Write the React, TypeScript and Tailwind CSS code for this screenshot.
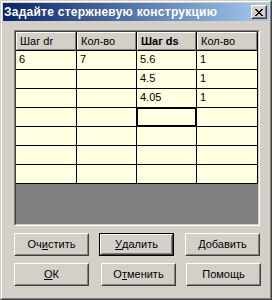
import React from "react";

const font = { fontFamily: '"Liberation Sans", Arial, sans-serif' };

function Btn({ children, def }: { children: React.ReactNode; def?: boolean }) {
  const inner = (
    <div className="h-full border border-t-white border-l-white border-r-[#404040] border-b-[#404040]">
      <div className="h-full border border-t-[#d4d0c8] border-l-[#d4d0c8] border-r-[#808080] border-b-[#808080] flex items-center justify-center text-[11px] text-black leading-none">
        {children}
      </div>
    </div>
  );
  if (def) {
    return <div className="w-[75px] h-[23px] border border-black">{inner}</div>;
  }
  return <div className="w-[75px] h-[23px]">{inner}</div>;
}

const colW = ["w-[61px]", "w-[60px]", "w-[60px]", "w-[61px]"];

const rows: string[][] = [
  ["6", "7", "5.6", "1"],
  ["", "", "4.5", "1"],
  ["", "", "4.05", "1"],
  ["", "", "", ""],
  ["", "", "", ""],
  ["", "", "", ""],
  ["", "", "", ""],
];

const headers = ["Шаг dr", "Кол-во", "Шаг ds", "Кол-во"];

export default function App() {
  return (
    <div style={font} className="w-[272px] h-[300px] bg-[#d4d0c8] border border-t-[#d4d0c8] border-l-[#d4d0c8] border-r-[#404040] border-b-[#404040]">
      <div className="h-full border border-t-white border-l-white border-r-[#808080] border-b-[#808080] p-px flex flex-col">
        {/* title bar */}
        <div className="h-[18px] flex items-center bg-[linear-gradient(to_right,#0a246a,#a6caf0)] pl-[1px] pr-[2px]">
          <span className="text-white font-bold text-[12px] tracking-[0.25px] leading-none flex-1 whitespace-nowrap">
            Задайте стержневую конструкцию
          </span>
          <div className="w-[16px] h-[14px] border border-t-white border-l-white border-r-[#404040] border-b-[#404040]">
            <div className="h-full border border-t-[#d4d0c8] border-l-[#d4d0c8] border-r-[#808080] border-b-[#808080] bg-[#d4d0c8] flex items-center justify-center">
              <svg width="8" height="7" viewBox="0 0 8 7" shapeRendering="crispEdges">
                <path d="M0 0h2v1H0zM6 0h2v1H6zM1 1h2v1H1zM5 1h2v1H5zM2 2h4v1H2zM3 3h2v1H3zM2 4h4v1H2zM1 5h2v1H1zM5 5h2v1H5zM0 6h2v1H0zM6 6h2v1H6z" fill="#000" />
              </svg>
            </div>
          </div>
        </div>

        {/* grid */}
        <div className="ml-[11px] mt-[9px] w-[246px] h-[196px] border border-t-[#808080] border-l-[#808080] border-r-white border-b-white">
          <div className="h-full border border-t-[#404040] border-l-[#404040] border-r-[#d4d0c8] border-b-[#d4d0c8] bg-[#808080] flex flex-col">
            <div className="flex h-[19px]">
              {headers.map((h, i) => (
                <div key={i} className={`${colW[i]} h-full border-r border-b border-black`}>
                  <div className={`h-full border border-t-white border-l-white border-r-[#808080] border-b-[#808080] bg-[#d4d0c8] flex items-center pl-[3px] text-[11px] leading-none text-black ${i === 2 ? "font-bold" : ""}`}>
                    {h}
                  </div>
                </div>
              ))}
            </div>
            {rows.map((r, ri) => (
              <div key={ri} className="flex h-[19px]">
                {r.map((c, ci) => (
                  <div
                    key={ci}
                    className={`${colW[ci]} h-full border-r border-b border-black bg-[#ffffe1] flex items-center pl-[3px] pb-[1px] text-[11px] leading-none text-black ${ri === 3 && ci === 2 ? "shadow-[inset_0_0_0_1px_#000]" : ""}`}
                  >
                    {c}
                  </div>
                ))}
              </div>
            ))}
          </div>
        </div>

        {/* buttons */}
        <div className="flex ml-[11px] mt-[7px]">
          <Btn>
            Оч<span className="underline">и</span>стить
          </Btn>
          <div className="ml-[10px]">
            <Btn def>
              <span className="underline">У</span>далить
            </Btn>
          </div>
          <div className="ml-[11px]">
            <Btn>
              <span className="underline">Д</span>обавить
            </Btn>
          </div>
        </div>
        <div className="flex ml-[11px] mt-[7px]">
          <Btn>
            <span className="underline">О</span>К
          </Btn>
          <div className="ml-[12px]">
            <Btn>
              О<span className="underline">т</span>менить
            </Btn>
          </div>
          <div className="ml-[10px]">
            <Btn>Помощь</Btn>
          </div>
        </div>
      </div>
    </div>
  );
}
